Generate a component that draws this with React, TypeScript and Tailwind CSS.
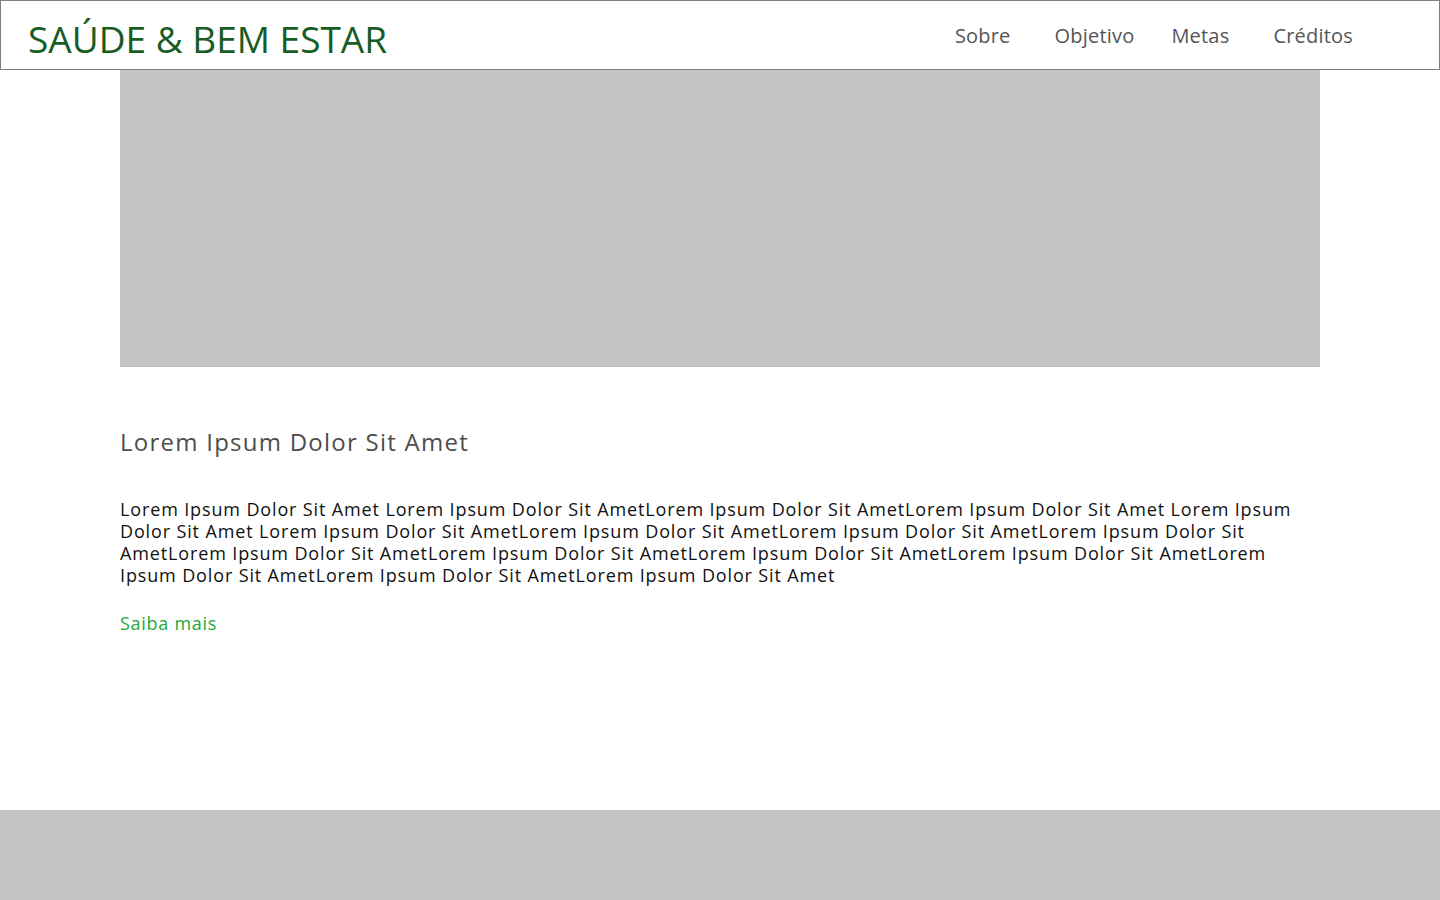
export default function App() {
  const text =
    "Lorem Ipsum Dolor Sit Amet Lorem Ipsum Dolor Sit AmetLorem Ipsum Dolor Sit AmetLorem Ipsum Dolor Sit Amet Lorem Ipsum Dolor Sit Amet Lorem Ipsum Dolor Sit AmetLorem Ipsum Dolor Sit AmetLorem Ipsum Dolor Sit AmetLorem Ipsum Dolor Sit AmetLorem Ipsum Dolor Sit AmetLorem Ipsum Dolor Sit AmetLorem Ipsum Dolor Sit AmetLorem Ipsum Dolor Sit AmetLorem Ipsum Dolor Sit AmetLorem Ipsum Dolor Sit AmetLorem Ipsum Dolor Sit Amet";

  return (
    <div className="min-h-screen flex flex-col bg-white font-['Open_Sans',sans-serif]">
      {/* Header */}
      <header className="h-[70px] border border-[#808080] flex items-center justify-between pl-[27px] pr-[86px]">
        <h1 className="text-[37px] leading-none text-[#185c25] pt-[6px]">
          SAÚDE &amp; BEM ESTAR
        </h1>
        <nav className="flex items-center text-[20px] text-[#555555] tracking-[0.01em] pt-[2px]">
          <a className="mr-[44px]">Sobre</a>
          <a className="mr-[37px]">Objetivo</a>
          <a className="mr-[44px]">Metas</a>
          <a>Créditos</a>
        </nav>
      </header>

      {/* Conteúdo */}
      <main className="flex-1 px-[120px]">
        <div className="h-[297px] bg-[#c4c4c4]" />
        <h2 className="mt-[60px] text-[24px] leading-[30px] text-[#4d4d4d] tracking-[0.052em]">
          Lorem Ipsum Dolor Sit Amet
        </h2>
        <p className="mt-[41px] text-[18px] leading-[22px] text-[#111111] tracking-[0.048em]">
          {text}
        </p>
        <a className="block mt-[26px] text-[18px] leading-[22px] text-[#22a83a] tracking-[0.04em]">Saiba mais</a>
      </main>

      {/* Rodapé */}
      <footer className="h-[90px] bg-[#c4c4c4]" />
    </div>
  );
}
